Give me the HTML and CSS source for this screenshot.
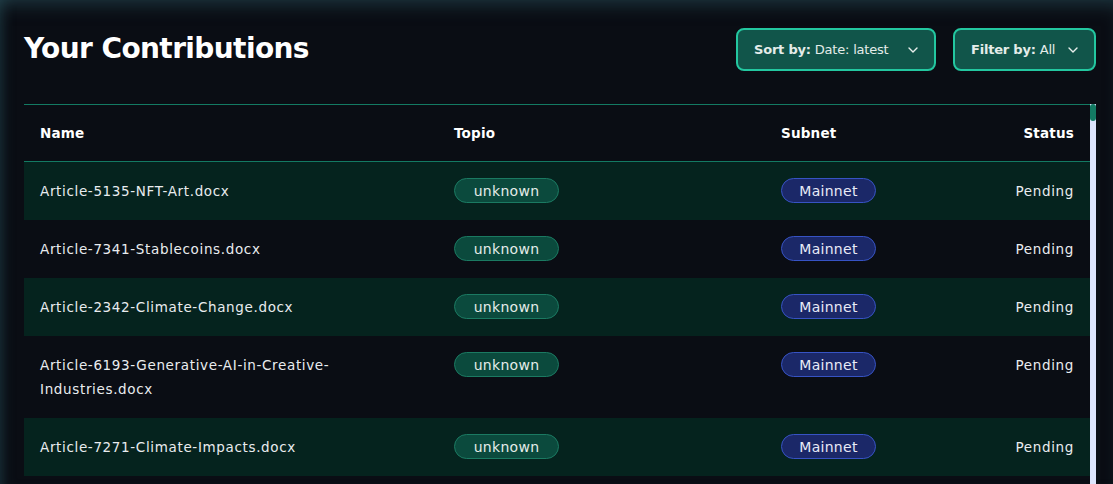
FILE: index.html
```html
<!DOCTYPE html>
<html>
<head>
<meta charset="utf-8">
<link rel="stylesheet" href="styles.css">
</head>
<body>
<div class="page">
  <header class="top">
    <h1 class="title">Your Contributions</h1>
    <div class="controls">
      <button class="select sort"><span class="label"><b>Sort by:</b> Date: latest</span>
        <svg class="chev" width="10" height="6" viewBox="0 0 10 6"><path d="M1 1l4 4 4-4" fill="none" stroke="#e8efec" stroke-width="1.4" stroke-linecap="round" stroke-linejoin="round"/></svg>
      </button>
      <button class="select filter"><span class="label"><b>Filter by:</b> All</span>
        <svg class="chev" width="10" height="6" viewBox="0 0 10 6"><path d="M1 1l4 4 4-4" fill="none" stroke="#e8efec" stroke-width="1.4" stroke-linecap="round" stroke-linejoin="round"/></svg>
      </button>
    </div>
  </header>
  <div class="tablewrap">
    <div class="table">
      <div class="row head">
        <div class="c name">Name</div>
        <div class="c">Topio</div>
        <div class="c">Subnet</div>
        <div class="c status">Status</div>
      </div>
      <div class="row alt">
        <div class="c name">Article-5135-NFT-Art.docx</div>
        <div class="c"><span class="pill topio">unknown</span></div>
        <div class="c"><span class="pill net">Mainnet</span></div>
        <div class="c status">Pending</div>
      </div>
      <div class="row">
        <div class="c name">Article-7341-Stablecoins.docx</div>
        <div class="c"><span class="pill topio">unknown</span></div>
        <div class="c"><span class="pill net">Mainnet</span></div>
        <div class="c status">Pending</div>
      </div>
      <div class="row alt">
        <div class="c name">Article-2342-Climate-Change.docx</div>
        <div class="c"><span class="pill topio">unknown</span></div>
        <div class="c"><span class="pill net">Mainnet</span></div>
        <div class="c status">Pending</div>
      </div>
      <div class="row">
        <div class="c name">Article-6193-Generative-AI-in-Creative-Industries.docx</div>
        <div class="c"><span class="pill topio">unknown</span></div>
        <div class="c"><span class="pill net">Mainnet</span></div>
        <div class="c status">Pending</div>
      </div>
      <div class="row alt">
        <div class="c name">Article-7271-Climate-Impacts.docx</div>
        <div class="c"><span class="pill topio">unknown</span></div>
        <div class="c"><span class="pill net">Mainnet</span></div>
        <div class="c status">Pending</div>
      </div>
    </div>
    <div class="scrollbar"><div class="thumb"></div></div>
  </div>
</div>
</body>
</html>
```
FILE: styles.css
```css
* { box-sizing: border-box; }
html, body { margin: 0; height: 100%; }
body {
  background: #0a0d14;
  color: #e9ecef;
  font-family: "DejaVu Sans", sans-serif;
  overflow: hidden;
}
.page {
  height: 100%;
  padding: 28px 17px 0 24px;
  box-shadow: inset 0 14px 18px -10px rgba(45, 90, 100, 0.55), inset 12px 0 14px -10px rgba(45, 90, 100, 0.45);
}
.top {
  display: flex;
  justify-content: space-between;
  align-items: flex-start;
  height: 76px;
}
.title {
  margin: 5px 0 0;
  font-size: 28px;
  font-weight: 800;
  letter-spacing: -0.6px;
  color: #ffffff;
  line-height: 32px;
}
.controls { display: flex; gap: 17px; }
.select {
  display: flex;
  align-items: center;
  justify-content: space-between;
  height: 43px;
  padding: 0 16px 0 16px;
  background: #11554a;
  border: 2px solid #23c7a0;
  border-radius: 8px;
  color: #e4ece9;
  font-family: inherit;
  font-size: 13px;
  letter-spacing: -0.2px;
}
.sort { width: 200px; }
.filter { width: 143px; }
.label { white-space: nowrap; }
.select b { font-weight: 600; }
.chev { margin-left: 10px; flex: none; }
.tablewrap {
  display: flex;
  height: 380px;
  overflow: hidden;
}
.table {
  flex: 1;
  border-top: 1px solid #137a63;
}
.row {
  display: grid;
  grid-template-columns: 414px 327px 1fr auto;
  padding: 0 16px;
  font-size: 13.5px;
  line-height: 24px;
  letter-spacing: 0.65px;
}
.row.alt { background: #05231e; }
.c { padding: 17px 0; }
.name { padding-right: 90px; }
.status { text-align: right; }
.head {
  border-bottom: 1px solid #137a63;
  font-weight: 700;
  color: #ffffff;
  padding-top: 16px;
  padding-bottom: 0;
  letter-spacing: 0.2px;
}
.head .c { padding: 0 0 16px; }
.pill {
  display: inline-flex;
  align-items: center;
  justify-content: center;
  height: 25px;
  border-radius: 13px;
  font-size: 14px;
  letter-spacing: 0.3px;
  vertical-align: top;
}
.c:has(.pill) { padding-top: 16px; padding-bottom: 16px; }
.topio {
  width: 105px;
  background: #0b4a3d;
  border: 1px solid #1b7a62;
  color: #e4ece9;
}
.net {
  width: 95px;
  background: #1b2868;
  border: 1px solid #3753c4;
  color: #e8ebf7;
}
.scrollbar {
  width: 6px;
  background: #dce4fc;
}
.thumb {
  height: 17px;
  background: #137a63;
  border-radius: 3px;
}
```
